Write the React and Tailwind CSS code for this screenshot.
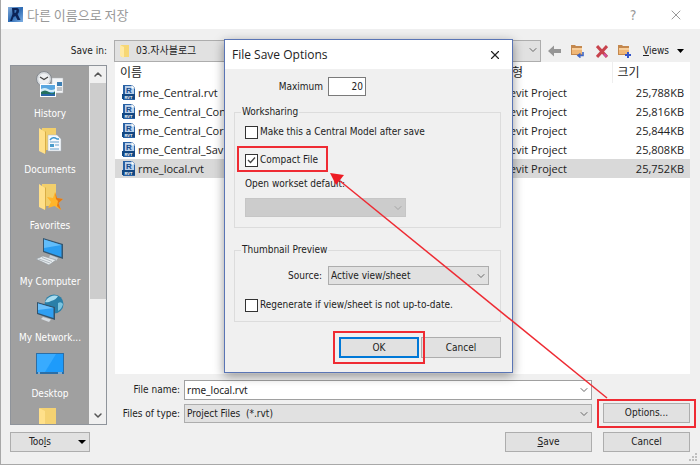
import React, { useState } from 'react';
import { ChevronDown, ChevronUp, X } from 'lucide-react';

const FILES = [
  { name: 'rme_Central.rvt', type: 'Revit Project', size: '25,788KB' },
  { name: 'rme_Central_Con', type: 'Revit Project', size: '25,816KB' },
  { name: 'rme_Central_Cor', type: 'Revit Project', size: '25,844KB' },
  { name: 'rme_Central_Sav', type: 'Revit Project', size: '25,808KB' },
  { name: 'rme_local.rvt', type: 'Revit Project', size: '25,752KB' },
];

const PLACES = [
  { label: 'History', icon: HistoryIcon },
  { label: 'Documents', icon: DocumentsIcon },
  { label: 'Favorites', icon: FavoritesIcon },
  { label: 'My Computer', icon: ComputerIcon },
  { label: 'My Network...', icon: NetworkIcon },
  { label: 'Desktop', icon: DesktopIcon },
];

export default function App() {
  const [selected, setSelected] = useState('rme_local.rvt');

  return (
    <div className="relative flex h-screen flex-col overflow-hidden border-b border-l border-[#a8a8a8] bg-[#f0f0f0] font-['DejaVu_Sans_Condensed','Noto_Sans_CJK_KR',sans-serif] text-[10px] leading-4 text-[#222]">
      {/* Title bar */}
      <header className="flex h-[29px] shrink-0 items-center bg-white pl-[7px] pr-4 text-[#999]">
        <AppLogo />
        <h1 className="ml-1 flex-1 font-['Noto_Sans_CJK_KR',sans-serif] text-[13px]">다른 이름으로 저장</h1>
        <button className="mr-[27px] w-4 text-sm" aria-label="Help">?</button>
        <button aria-label="Close"><X className="h-4 w-4" strokeWidth={1.5} /></button>
      </header>

      {/* Toolbar */}
      <div className="flex shrink-0 items-center pr-2.5 pt-[11px]">
        <label htmlFor="folder" className="w-[106px] shrink-0 text-right">Save in:</label>
        <div className="relative ml-[7px] flex-1">
          <SmallFolder className="absolute left-[5px] top-1 h-3.5 w-3" />
          <Combo id="folder" className="h-[22px] pl-[21px]">
            <option>03.자사블로그</option>
          </Combo>
        </div>
        <div className="flex w-[149px] items-center pl-[7px]">
          <button aria-label="Back"><BackIcon /></button>
          <button className="ml-2.5" aria-label="Up one level"><FolderTool up /></button>
          <button className="ml-3" aria-label="Delete"><DeleteIcon /></button>
          <button className="ml-2.5" aria-label="New folder"><FolderTool /></button>
          <button className="ml-3 flex items-center gap-2">
            <span><u>V</u>iews</span>
            <Triangle className="h-1 w-[7px]" />
          </button>
        </div>
      </div>

      {/* Places + files */}
      <div className="flex min-h-0 flex-1 pl-[9px] pr-2.5">
        <div className="mb-2 mt-[3px] flex min-h-0 w-[97px] shrink-0 flex-col">
          <nav className="flex min-h-0 flex-1 border border-[#8f949b] bg-[#f0f0f0]">
            <ul className="min-w-0 flex-1 overflow-hidden bg-[#a0a0a0]">
              {PLACES.map(({ label, icon: Icon }) => (
                <li key={label} className="h-14 pt-1">
                  <button className="flex w-full flex-col items-center whitespace-nowrap text-white">
                    <Icon />
                    <span className="mt-2">{label}</span>
                  </button>
                </li>
              ))}
              <li className="flex justify-center pt-1"><FolderShape /></li>
            </ul>
            <div className="flex w-[17px] flex-col items-center">
              <ChevronUp className="h-[17px] w-3 shrink-0 text-[#555]" strokeWidth={3} />
              <div className="w-4 flex-[216] bg-[#cdcdcd]" />
              <div className="flex-[108]" />
              <ChevronDown className="h-[17px] w-3 shrink-0 text-[#555]" strokeWidth={3} />
            </div>
          </nav>
          <button className="mb-1 mt-[7px] flex h-5 w-20 items-center justify-between border border-[#adadad] bg-[#e1e1e1] pl-[18px] pr-[3px]">
            <span>Too<u>l</u>s</span>
            <Triangle className="h-1 w-2" />
          </button>
        </div>

        <div className="ml-2 flex min-w-0 flex-1 flex-col">
          <div className="min-h-0 flex-1 bg-white font-['Open_Sans','Noto_Sans_CJK_KR',sans-serif] text-[11px]">
            <table className="w-full table-fixed border-collapse">
              <colgroup>
                <col className="w-[381px]" />
                <col />
                <col className="w-[78px]" />
              </colgroup>
              <thead>
                <tr className="h-[21px] text-left text-xs">
                  <th className="pl-[5px] font-normal">이름</th>
                  <th className="pl-[5px] font-normal">유형</th>
                  <th className="border-l border-[#eee] pl-[5px] font-normal">크기</th>
                </tr>
              </thead>
              <tbody>
                {FILES.map((f) => (
                  <tr
                    key={f.name}
                    onClick={() => setSelected(f.name)}
                    className={selected === f.name ? 'h-[19px] bg-[#d9d9d9]' : 'h-[19px]'}
                  >
                    <td className="p-0 pl-[7px]">
                      <span className="flex items-center gap-[3px] whitespace-nowrap">
                        <RvtIcon />
                        {f.name}
                      </span>
                    </td>
                    <td className="whitespace-nowrap p-0 pl-[7px]">{f.type}</td>
                    <td className="p-0 pr-1.5 text-right">{f.size}</td>
                  </tr>
                ))}
              </tbody>
            </table>
          </div>

          {/* File name, type and buttons */}
          <div className="flex shrink-0 items-end gap-[11px] pt-1.5">
            <div className="flex flex-1 flex-col gap-1">
              <div className="flex items-center">
                <label htmlFor="file-name" className="w-[69px] pr-1 text-right">File name:</label>
                <div className="relative flex-1">
                  <input
                    id="file-name"
                    defaultValue="rme_local.rvt"
                    className="block h-5 w-full border border-[#a0a0a0] bg-white px-0.5 font-['Noto_Sans',sans-serif] outline-none"
                  />
                  <ChevronDown className="absolute right-0.5 top-1 h-3 w-3 text-[#666]" strokeWidth={2} />
                </div>
              </div>
              <div className="flex items-center">
                <label htmlFor="file-type" className="w-[69px] whitespace-nowrap pr-1 text-right">Files of type:</label>
                <div className="relative flex-1">
                  <Combo id="file-type" className="h-[19px] pl-0.5">
                    <option>Project Files&nbsp; (*.rvt)</option>
                  </Combo>
                </div>
              </div>
            </div>
            <div className="relative w-[87px]">
              <DialogButton className="h-5 w-full">Options...</DialogButton>
              <Highlight className="-inset-x-[6px] -bottom-[5px] -top-1" />
            </div>
          </div>
          <div className="mb-3 mt-[9px] flex shrink-0 justify-end gap-[11px]">
            <DialogButton className="h-5 w-[87px]"><u>S</u>ave</DialogButton>
            <DialogButton className="h-5 w-[87px]">Cancel</DialogButton>
          </div>
        </div>
      </div>

      <ResizeGrip />
      <SaveOptionsDialog />

      {/* Arrow from Options to Compact File */}
      <svg className="pointer-events-none absolute left-0 top-0 h-[465px] w-[700px]" viewBox="1 0 700 465">
        <path d="M607 398 L340 181" stroke="#ee2b33" strokeWidth="1.5" />
        <path d="M330 173 L344 175 L336 185 Z" fill="#ed1c24" />
      </svg>
    </div>
  );
}

function SaveOptionsDialog() {
  return (
    <section
      role="dialog"
      aria-label="File Save Options"
      className="absolute left-[223px] top-[39px] w-[289px] border border-[#5a75b5] bg-[#f0f0f0] pb-[14px] shadow-[0_3px_10px_rgba(0,0,0,0.4)]"
    >
      <div className="flex h-[29px] items-center justify-between bg-white pl-[7px] pr-[10px]">
        <h2 className="font-['Open_Sans',sans-serif] text-xs">File Save Options</h2>
        <button aria-label="Close options"><X className="h-3.5 w-3.5" strokeWidth={2} /></button>
      </div>

      <div className="pl-[9px] pr-[11px]">
        <div className="flex items-center pt-2">
          <label htmlFor="maximum" className="w-[89px] text-right">Maximum</label>
          <input
            id="maximum"
            defaultValue="20"
            className="ml-[5px] h-[19px] w-[38px] border border-[#7a7a7a] bg-white px-0.5 text-right outline-none"
          />
        </div>

        <fieldset className="mt-2 border border-[#dcdcdc] px-2.5 pb-2.5">
          <legend className="-ml-1 px-px">Worksharing</legend>
          <div className="mt-1">
            <CheckRow id="central" label="Make this a Central Model after save" />
          </div>
          <div className="relative mt-3 w-fit pr-2">
            <CheckRow id="compact" label="Compact File" checked />
            <Highlight className="-bottom-1 -left-2 -right-0.5 -top-1.5" />
          </div>
          <label htmlFor="workset" className="mt-2 block">Open workset default:</label>
          <div className="relative mt-1.5 w-[161px]">
            <Combo id="workset" disabled className="h-[19px]" />
          </div>
        </fieldset>

        <fieldset className="mt-[14px] border border-[#dcdcdc] px-2.5 pb-2">
          <legend className="-ml-1 px-px">Thumbnail Preview</legend>
          <div className="mt-2 flex items-center">
            <label htmlFor="source" className="w-[77px] text-right">Source:</label>
            <div className="relative ml-1.5 w-[161px]">
              <Combo id="source" className="h-[19px] pl-0.5">
                <option>Active view/sheet</option>
              </Combo>
            </div>
          </div>
          <div className="mt-3">
            <CheckRow id="regenerate" label="Regenerate if view/sheet is not up-to-date." />
          </div>
        </fieldset>

        <div className="mt-[15px] flex justify-end gap-0.5">
          <div className="relative">
            <button className="h-[21px] w-20 border-2 border-[#0078d7] bg-[#e1e1e1]">OK</button>
            <Highlight className="-inset-x-[6px] -inset-y-1.5" />
          </div>
          <DialogButton className="h-[21px] w-20">Cancel</DialogButton>
        </div>
      </div>
    </section>
  );
}

function CheckRow({ id, label, checked = false }) {
  return (
    <div className="relative flex items-center">
      <input
        id={id}
        type="checkbox"
        defaultChecked={checked}
        className="peer h-[13px] w-[13px] shrink-0 appearance-none border border-[#333] bg-white"
      />
      <svg className="pointer-events-none absolute left-0.5 top-1 hidden h-2 w-[9px] peer-checked:block" viewBox="0 0 9 8" fill="none">
        <path d="M1 4 L3.5 6.5 L8 1.5" stroke="#444" strokeWidth="1.3" />
      </svg>
      <label htmlFor={id} className="ml-0.5 whitespace-nowrap">{label}</label>
    </div>
  );
}

function Combo({ id, className, disabled = false, children }) {
  return (
    <>
      <select
        id={id}
        disabled={disabled}
        className={`block w-full appearance-none border pr-5 outline-none ${
          disabled ? 'border-[#c6c6c6] bg-[#cccccc]' : 'border-[#adadad] bg-[#e1e1e1]'
        } ${className}`}
      >
        {children}
      </select>
      <ChevronDown
        className={`pointer-events-none absolute right-0.5 top-1 h-3 w-3 ${disabled ? 'text-[#a5a5a5]' : 'text-[#666]'}`}
        strokeWidth={2}
      />
    </>
  );
}

function DialogButton({ className, children }) {
  return <button className={`border border-[#adadad] bg-[#e1e1e1] ${className}`}>{children}</button>;
}

function Highlight({ className }) {
  return <span className={`pointer-events-none absolute border-2 border-[#ef2b33] ${className}`} />;
}

function Triangle({ className }) {
  return (
    <svg className={className} viewBox="0 0 8 4" preserveAspectRatio="none">
      <path d="M0 0 H8 L4 4 Z" fill="#000" />
    </svg>
  );
}

function ResizeGrip() {
  return (
    <svg className="absolute bottom-0.5 right-0.5 h-[9px] w-[9px]" viewBox="0 0 9 9" fill="#bfbfbf">
      <path d="M6 0h2v2h-2z M3 3h2v2h-2z M6 3h2v2h-2z M0 6h2v2h-2z M3 6h2v2h-2z M6 6h2v2h-2z" />
    </svg>
  );
}

function AppLogo() {
  return (
    <svg className="h-[15px] w-[15px]" viewBox="0 0 15 15">
      <defs>
        <linearGradient id="logo" x1="0" y1="0" x2="1" y2="1">
          <stop offset="0" stopColor="#86aedb" />
          <stop offset="0.5" stopColor="#2f6cb4" />
          <stop offset="1" stopColor="#7fb0e4" />
        </linearGradient>
      </defs>
      <rect width="15" height="15" fill="url(#logo)" />
      <path d="M4 1 L9 1 Q11 1 11 4 Q11 6 9.5 7 L12.5 13 L9.5 13 L7.5 9 L5.5 10 L4 14 L2 14 L4.5 7 Z" fill="#0b2358" />
      <path d="M6.5 3 L8.5 3 L8 5.5 L6.5 6 Z" fill="#3e78bd" />
    </svg>
  );
}

function RvtIcon() {
  return (
    <svg className="h-[15px] w-[13px] shrink-0" viewBox="0 0 13 15">
      <path d="M1 0 H10 L13 3 V15 H1 Z" fill="#2a62a5" />
      <path d="M3 1 H9.5 L12 3.5 V9 H3 Z" fill="#b9d0ea" />
      <path d="M9.5 0 L13 3.5 H9.5 Z" fill="#fff" />
      <rect y="9" width="13" height="5" fill="#134782" />
      <text x="4" y="7.5" fontSize="8" fontWeight="bold" fontFamily="Liberation Sans" fill="#174b8c">R</text>
      <text x="2.5" y="13.5" fontSize="4" fontWeight="bold" fontFamily="Liberation Sans" fill="#fff">RVT</text>
    </svg>
  );
}

function SmallFolder({ className }) {
  return (
    <svg className={className} viewBox="0 0 12 14">
      <path d="M2 1 H10 V13 H2 Z" fill="#f7d774" />
      <path d="M1 1 L5 3 V14 L1 12 Z" fill="#ffe9a3" />
    </svg>
  );
}

function BackIcon() {
  return (
    <svg className="h-3 w-[13px]" viewBox="0 0 13 12">
      <path d="M0 6 L6 0.5 V4 H13 V8 H6 V11.5 Z" fill="#969696" />
    </svg>
  );
}

function FolderTool({ up = false }) {
  return (
    <svg className="h-[13px] w-[13px]" viewBox="0 0 13 13">
      <path d="M0 0 H4 L5 1 H11 V10 H0 Z" fill="#c4884e" />
      <path d="M1 3 H11 V9 H1 Z" fill="#f0b777" />
      <path d="M1 3 H11 V5 H1 Z" fill="#f8cf9c" />
      {up ? (
        <path d="M12 7 V10.5 H8 M9.5 8.5 L7 10.5 L9.5 12.5" fill="none" stroke="#3f66c4" strokeWidth="1.6" />
      ) : (
        <path d="M10 7 V13 M7 10 H13" stroke="#3455c8" strokeWidth="2" />
      )}
    </svg>
  );
}

function DeleteIcon() {
  return (
    <svg className="h-[13px] w-3" viewBox="0 0 12 13">
      <path d="M1 1 L11 12 M11 1 L1 12" stroke="#c8434d" strokeWidth="3" />
      <path d="M8 9 L10.5 11.5" stroke="#cf52a8" strokeWidth="2" />
    </svg>
  );
}

function PlaceSvg({ children }) {
  return <svg className="h-7 w-7" viewBox="0 0 28 28">{children}</svg>;
}

function FolderPaths() {
  return (
    <>
      <path d="M6 2 H20 V24 H6 Z" fill="#f2cf6b" />
      <path d="M3 2 L9 6 V28 L3 25 Z" fill="#ffe08a" />
      <path d="M9 6 V28 L10 26 V5 Z" fill="#d9ae45" />
    </>
  );
}

function FolderShape() {
  return (
    <PlaceSvg>
      <path d="M4 2 H20 V28 H4 Z" fill="#f5d272" />
      <path d="M3 2 L9 5 V28 H3 Z" fill="#ffe08a" />
    </PlaceSvg>
  );
}

function HistoryIcon() {
  return (
    <PlaceSvg>
      <circle cx="8" cy="9" r="7.5" fill="#d4d8dc" stroke="#858a90" />
      <circle cx="8" cy="9" r="5.5" fill="#eef0f2" />
      <path d="M4 7 L8 9.5 L12 7" fill="none" stroke="#444" strokeWidth="1.2" />
      <path d="M16 8 H27 V23 H16 Z" fill="#f3f5f7" stroke="#b0b5ba" strokeWidth="0.5" />
      <path d="M21 12 H26 V16 H21 Z" fill="#3d7fb4" />
      <path d="M21 18 H26 M21 20 H26" stroke="#8a9097" />
      <path d="M4 14 H20 V27 H4 Z" fill="#fff" />
      <path d="M5 15 H19 V26 H5 Z" fill="#5aa7e0" />
      <path d="M5 19 Q9 17 12 19 T19 19 V22 H5 Z" fill="#d3ecf8" />
      <path d="M5 22 Q9 19 13 22 T19 21 V26 H5 Z" fill="#23705e" />
      <path d="M5 24 H19 V26 H5 Z" fill="#2a66a8" />
    </PlaceSvg>
  );
}

function DocumentsIcon() {
  return (
    <PlaceSvg>
      <FolderPaths />
      <path d="M12 9 H21 L25 13 V25 H12 Z" fill="#f6f9fc" stroke="#a9b4c0" strokeWidth="0.5" />
      <path d="M14 14 Q17 10 21 13 H23" fill="none" stroke="#3c97cf" strokeWidth="1.5" />
      <path d="M14 16 H23 M19 19 H23 M14 23 H23" stroke="#6aa5cf" />
      <path d="M14 18 H18 V21 H14 Z" fill="#4a9ccb" />
    </PlaceSvg>
  );
}

function FavoritesIcon() {
  return (
    <PlaceSvg>
      <FolderPaths />
      <path d="M19 10 L21 16 L27 17 L22.5 21 L25 28 L18.5 24 L12 26 L15 20 L11 15 L17 16 Z" fill="#ffb52b" />
      <path d="M19 10 L21 16 L27 17 L22.5 21 L25 28 L21 24 L22 19 L20 17 Z" fill="#e47717" />
    </PlaceSvg>
  );
}

function ComputerIcon() {
  return (
    <PlaceSvg>
      <path d="M7 0 L27 6 V21 L7 14 Z" fill="#35566f" />
      <path d="M8 1.5 L25.5 7 V19 L8 13 Z" fill="#2b9df0" />
      <path d="M8 1.5 L25.5 7 L8 10 Z" fill="#62bdfa" />
      <path d="M14 17 L22 20 L20 23 L13 20 Z" fill="#c9d1d8" />
      <path d="M0 21 L7 18 L20 22 L13 27 Z" fill="#e7ecef" stroke="#8e979e" strokeWidth="0.6" />
      <path d="M3 21 L14 25 M6 19.5 L16 23.5" stroke="#9ba5ac" strokeWidth="0.7" />
    </PlaceSvg>
  );
}

function NetworkIcon() {
  return (
    <PlaceSvg>
      <circle cx="18" cy="10" r="9.5" fill="#2a7fa8" />
      <path d="M11 5 Q16 0 22 2 Q20 6 15 7 Q12 9 9 8 Z" fill="#a9dcef" />
      <path d="M22 9 Q25 7 27 10 Q26 15 22 17 Z" fill="#7cc4df" />
      <path d="M1 8 L19 13 V26 L1 20 Z" fill="#33536b" />
      <path d="M2 9.5 L17.5 14 V24 L2 19 Z" fill="#2f9ff2" />
      <path d="M2 9.5 L17.5 14 L2 16 Z" fill="#6cc0fa" />
      <path d="M7 23 L15 25.5 L13 28 L5 25 Z" fill="#d5dbe0" />
    </PlaceSvg>
  );
}

function DesktopIcon() {
  return (
    <PlaceSvg>
      <path d="M0 3 H28 V24 H0 Z" fill="#2b6ea6" />
      <path d="M1 4 H27 V22 H1 Z" fill="#1d9bfb" />
      <path d="M1 4 H20 L9 22 H1 Z" fill="#38abff" />
      <path d="M2 23 H4 M22 23 H26" stroke="#cfe9ff" />
    </PlaceSvg>
  );
}
